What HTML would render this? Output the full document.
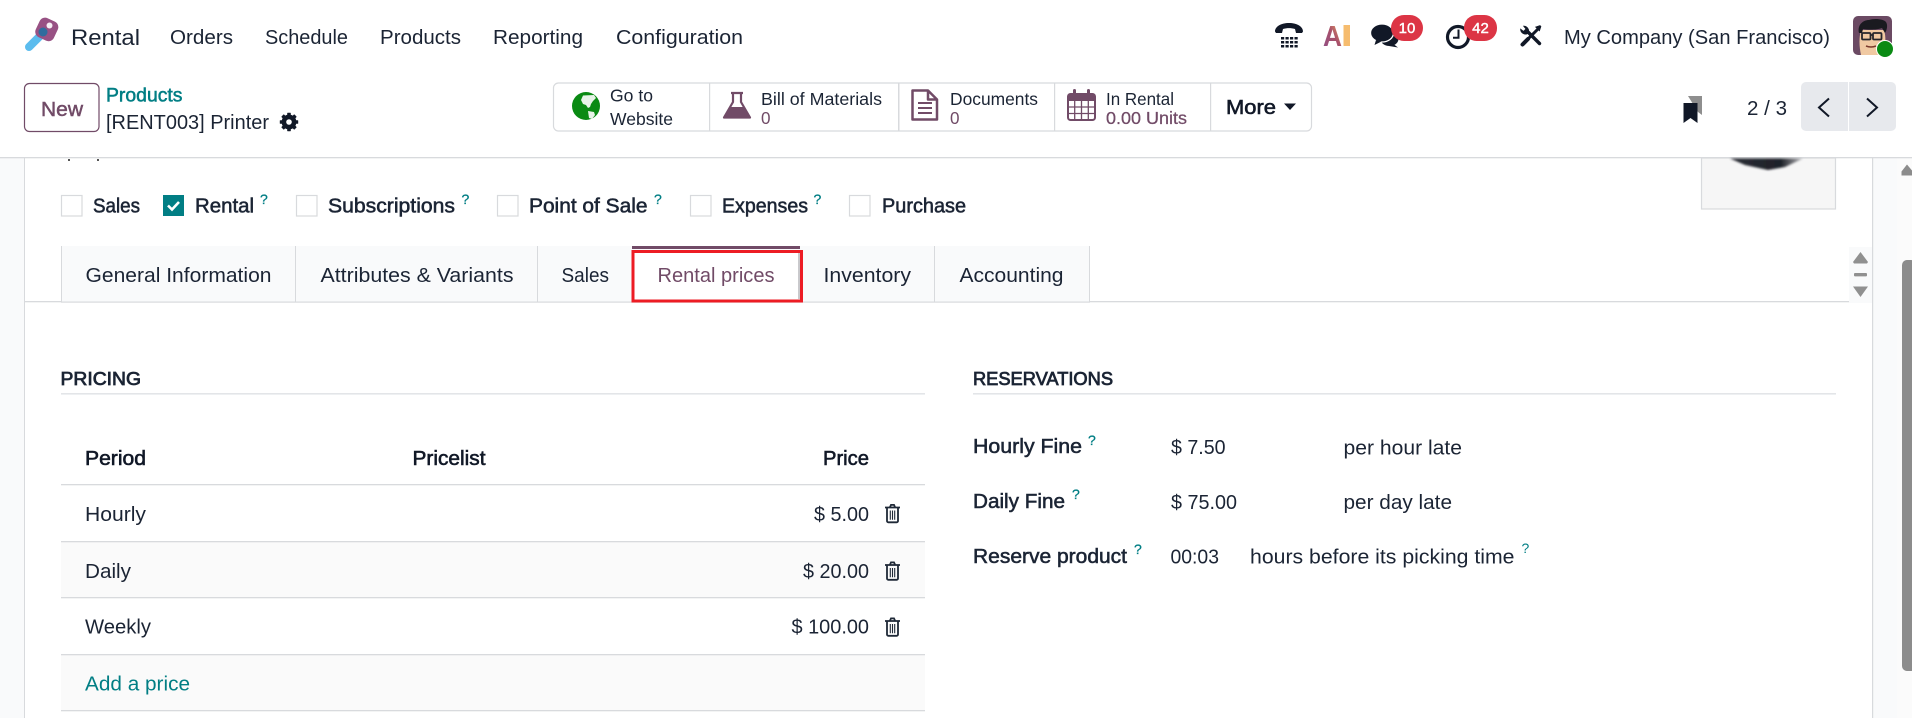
<!DOCTYPE html>
<html lang="en">
<head>
<meta charset="utf-8">
<title>Rental - Printer</title>
<style>
html,body{margin:0;padding:0;background:#fff;width:1912px;height:718px;overflow:hidden}
svg{display:block}
text{font-family:"Liberation Sans",Arial,sans-serif;font-size:20.5px;fill:#1b2434;white-space:pre}
.m{stroke:#1b2434;stroke-width:.55}
.b{fill:#111827;stroke:#111827;stroke-width:.6}
.h{fill:#1b2434;stroke:#1b2434;stroke-width:.8;font-size:18.5px}
.s{font-size:17.5px}
.p{fill:#714B67}
.t{fill:#017E84}
.q{font-size:14px;fill:#017E84;stroke:#017E84;stroke-width:.3}
.w{font-size:15px;fill:#fff;stroke:#fff;stroke-width:.4;text-anchor:middle}
.cb{fill:#fff;stroke:#d8dadd;stroke-width:1.2}
.ln{fill:#d8dadd}
</style>
</head>
<body>
<svg width="1912" height="718" viewBox="0 0 1912 718" xmlns="http://www.w3.org/2000/svg">
<defs>
<linearGradient id="aig" x1="0" y1="1" x2="1" y2="0"><stop offset="0" stop-color="#8e4f8a"/><stop offset=".55" stop-color="#a8506a"/><stop offset="1" stop-color="#f6b25c"/></linearGradient>
<linearGradient id="prn" x1="0" y1="0" x2="1" y2="0"><stop offset="0" stop-color="#2a2d35"/><stop offset=".7" stop-color="#1e2128"/><stop offset="1" stop-color="#b8b8bc"/></linearGradient>
<filter id="bl"><feGaussianBlur stdDeviation="1"/></filter>
<g id="tr" fill="none" stroke="#1f2937" stroke-width="1.8">
<path d="M0 3.5H15M4.8 3.5 6 .9H9L10.200 3.500"/>
<path d="M2 3.500V17a1.300 1.300 0 0 0 1.300 1.300H11.700A1.300 1.300 0 0 0 13 17V3.500"/>
<path stroke-width="1.100" d="M5.300 6.500V15.800M7.500 6.500V15.800M9.700 6.500V15.800"/>
</g>
</defs>

<rect width="1912" height="718" fill="#fff"/>

<!-- gutters -->
<rect x="0" y="158" width="24" height="560" fill="#f9fafb"/>
<rect x="24" y="158" width="1" height="560" class="ln"/>
<rect x="1873" y="158" width="24" height="560" fill="#f9fafb"/>
<rect x="1872" y="158" width="1.200" height="560" class="ln"/>
<rect x="1897" y="158" width="15" height="560" fill="#fbfbfb"/>
<path d="M1907 164.500l5 6v5h-10.500v-4z" fill="#8c8c8c"/>
<rect x="1902" y="260" width="14" height="411" rx="5" fill="#8c8c8c"/>

<!-- top bar -->
<g>
<line x1="29" y1="47" x2="44" y2="32" stroke="#5bbcee" stroke-width="8" stroke-linecap="round"/>
<rect x="37" y="19" width="20" height="21" rx="6" fill="#985184" transform="rotate(25 47 29)"/>
<circle cx="49.500" cy="25.500" r="3" fill="#f6eef4"/>
<circle cx="43" cy="32" r="4.500" fill="#2f6c9e"/>
</g>
<text x="71" y="45" style="font-size:22.500px" textLength="69" lengthAdjust="spacingAndGlyphs">Rental</text>
<text x="170" y="44" textLength="63" lengthAdjust="spacingAndGlyphs">Orders</text>
<text x="265" y="44" textLength="83" lengthAdjust="spacingAndGlyphs">Schedule</text>
<text x="380" y="44" textLength="81" lengthAdjust="spacingAndGlyphs">Products</text>
<text x="493" y="44" textLength="90" lengthAdjust="spacingAndGlyphs">Reporting</text>
<text x="616" y="44" textLength="127" lengthAdjust="spacingAndGlyphs">Configuration</text>

<!-- phone -->
<path d="M1275 31.500c0-5 6-8.500 14-8.500s14 3.500 14 8.500l-1 1.500h-6l-1-4c-4-1.200-8-1.200-12 0l-1 4h-6z" fill="#111827"/>
<g fill="#111827">
<rect x="1281" y="37" width="3.200" height="2.500"/><rect x="1285.500" y="37" width="3.200" height="2.500"/><rect x="1290" y="37" width="3.200" height="2.500"/><rect x="1294.500" y="37" width="3.200" height="2.500"/>
<rect x="1281" y="41" width="3.200" height="2.500"/><rect x="1285.500" y="41" width="3.200" height="2.500"/><rect x="1290" y="41" width="3.200" height="2.500"/><rect x="1294.500" y="41" width="3.200" height="2.500"/>
<rect x="1281" y="45" width="3.200" height="2.500"/><rect x="1285.500" y="45" width="3.200" height="2.500"/><rect x="1290" y="45" width="3.200" height="2.500"/><rect x="1294.500" y="45" width="3.200" height="2.500"/>
</g>
<!-- AI -->
<text x="1323" y="46" style="font-size:29px;font-weight:bold;fill:url(#aig)" textLength="19" lengthAdjust="spacingAndGlyphs">A</text>
<rect x="1343.500" y="25" width="6.500" height="21" fill="#f6bc6e"/>
<!-- chat -->
<ellipse cx="1389.500" cy="39" rx="9" ry="7" fill="#111827"/>
<path d="M1392 43l6 4.500-9-1.500z" fill="#111827"/>
<ellipse cx="1382" cy="33" rx="11.500" ry="9" fill="#111827" stroke="#fff" stroke-width="1.300"/>
<path d="M1376 40l-1.500 5 7-3.500z" fill="#111827"/>
<rect x="1391" y="15" width="32" height="26" rx="13" fill="#dc3545"/>
<text x="1407" y="33" class="w">10</text>
<!-- clock -->
<circle cx="1458" cy="37" r="10.500" fill="none" stroke="#111827" stroke-width="3.200"/>
<path d="M1458.500 29.500V37.800H1453" fill="none" stroke="#111827" stroke-width="2"/>
<rect x="1464" y="15" width="33" height="26" rx="12.500" fill="#dc3545"/>
<text x="1480.500" y="33" class="w">42</text>
<!-- tools -->
<g fill="none" stroke="#111827">
<path d="M1528 32 1539.500 43.500" stroke-width="3.400" stroke-linecap="round"/>
<path d="M1520.500 29a5 5 0 0 0 6.500 5l1.500-1.500a5 5 0 0 0-5-6.500l2.300 3-2.300 2.300z" fill="#111827" stroke-width=".6"/>
<path d="M1537.500 29.500 1524.500 42.500" stroke-width="3" stroke-linecap="round"/>
<path d="M1535.500 27l4.500-1.500 1 1-1.500 4.500z" fill="#111827" stroke-width=".6"/>
<path d="M1528 39l-5.500 5.500" stroke-width="4" stroke-linecap="round"/>
</g>
<text x="1564" y="44" textLength="266" lengthAdjust="spacingAndGlyphs">My Company (San Francisco)</text>
<!-- avatar -->
<rect x="1853" y="16" width="39" height="39" rx="5" fill="#6b4a63"/>
<path d="M1861 55c-2-9-2-18 0-25h23c2 6 2 16-1 25z" fill="#f0c9a2"/>
<path d="M1859 33c-2-8 4-13 10-13 5-2 15-1 17 2 2 3 1 8-1 11l-3-5c-5 2-14 2-19 1l-1 4z" fill="#1a1a20"/>
<g fill="none" stroke="#26262c" stroke-width="1.800">
<rect x="1862" y="33" width="8.500" height="6.500" rx="1"/><rect x="1873" y="33" width="8.500" height="6.500" rx="1"/><path d="M1870.500 35h2.500"/>
</g>
<path d="M1866 46q5 2 10 0" fill="none" stroke="#7a3a2c" stroke-width="1.500"/>
<circle cx="1885" cy="49" r="8.500" fill="#0a8a13" stroke="#fff" stroke-width="1"/>

<!-- control row -->
<rect x="24.500" y="83.500" width="74.500" height="48" rx="5" fill="#fff" stroke="#714B67" stroke-width="1.200"/>
<text x="41" y="116" class="p" stroke="#714B67" stroke-width=".5" textLength="42" lengthAdjust="spacingAndGlyphs">New</text>
<text x="106" y="101.500" class="t" stroke="#017E84" stroke-width=".5" style="font-size:19px" textLength="76.500" lengthAdjust="spacingAndGlyphs">Products</text>
<text x="106" y="129" textLength="163" lengthAdjust="spacingAndGlyphs">[RENT003] Printer</text>
<g fill="#111827" transform="translate(289 122)">
<circle r="5.800" fill="none" stroke="#111827" stroke-width="3.200"/>
<rect x="-1.800" y="-9.200" width="3.600" height="18.400" rx=".6"/>
<rect x="-1.800" y="-9.200" width="3.600" height="18.400" rx=".6" transform="rotate(45)"/>
<rect x="-1.800" y="-9.200" width="3.600" height="18.400" rx=".6" transform="rotate(90)"/>
<rect x="-1.800" y="-9.200" width="3.600" height="18.400" rx=".6" transform="rotate(135)"/>
<circle r="2.800" fill="#fff"/>
</g>

<!-- stat buttons -->
<rect x="553.500" y="83" width="758" height="48" rx="5" fill="#fff" stroke="#d8dadd" stroke-width="1.200"/>
<rect x="709" y="83" width="1.200" height="48" class="ln"/>
<rect x="898" y="83" width="1.500" height="48" class="ln"/>
<rect x="1054" y="83" width="1.200" height="48" class="ln"/>
<rect x="1210" y="83" width="1.200" height="48" class="ln"/>

<circle cx="586" cy="106" r="14" fill="#0a8a13"/>
<path d="M583 95.500l11-.5 2 3-3 3-2 3-1 3-2 1-2-3-3-1-2-4z M588 111l6 1 1 3-3 4-3-1z" fill="#e8f3e8"/>
<text x="610" y="101.500" class="s" textLength="43" lengthAdjust="spacingAndGlyphs">Go to</text>
<text x="610" y="125" class="s" textLength="63" lengthAdjust="spacingAndGlyphs">Website</text>

<path d="M731 93h12M733 93v9l-9 15.500h26l-9-15.500v-9" fill="none" stroke="#714B67" stroke-width="2.200" stroke-linejoin="round"/>
<path d="M729.500 107h15l6 11.500H723.500z" fill="#714B67"/>
<text x="761" y="105" class="s" textLength="121" lengthAdjust="spacingAndGlyphs">Bill of Materials</text>
<text x="761" y="124" class="s p" textLength="9.500" lengthAdjust="spacingAndGlyphs">0</text>

<path d="M912.500 90.500H928l9 9v20h-24.500zM928 90.500v9h9" fill="none" stroke="#714B67" stroke-width="2.500" stroke-linejoin="round"/>
<path d="M918 103h14M918 108h14M918 113h14" stroke="#714B67" stroke-width="2"/>
<text x="950" y="105" class="s" textLength="88" lengthAdjust="spacingAndGlyphs">Documents</text>
<text x="950" y="124" class="s p" textLength="9.500" lengthAdjust="spacingAndGlyphs">0</text>

<rect x="1068" y="94" width="27" height="26" rx="2.500" fill="none" stroke="#714B67" stroke-width="2"/>
<rect x="1068" y="94" width="27" height="7" fill="#714B67"/>
<path d="M1074.500 90.500v6.500M1088.500 90.500v6.500" stroke="#714B67" stroke-width="3" stroke-linecap="round"/>
<path d="M1068 107h27M1068 113.500h27M1074.700 101v19M1081.500 101v19M1088.300 101v19" stroke="#714B67" stroke-width="1.300"/>
<text x="1106" y="105" class="s" textLength="68" lengthAdjust="spacingAndGlyphs">In Rental</text>
<text x="1106" y="124" class="s p" stroke="#714B67" stroke-width=".25" textLength="81" lengthAdjust="spacingAndGlyphs">0.00 Units</text>

<text x="1226" y="114" class="b" textLength="50" lengthAdjust="spacingAndGlyphs">More</text>
<path d="M1284 103.500h12l-6 6.500z" fill="#111827"/>

<!-- right control -->
<path d="M1688 96h14v19l-4-3z" fill="#8e8e8e"/>
<path d="M1683.500 103h14v20l-7-5-7 5z" fill="#111827"/>
<text x="1747" y="115" textLength="40" lengthAdjust="spacingAndGlyphs">2 / 3</text>
<rect x="1801" y="82" width="95" height="49" rx="5" fill="#e7e9ed"/>
<rect x="1848" y="82" width="1" height="49" fill="#fff"/>
<path d="M1829 98.500l-10 9 10 9" fill="none" stroke="#111827" stroke-width="2"/>
<path d="M1867 98.500l10 9-10 9" fill="none" stroke="#111827" stroke-width="2"/>

<rect x="0" y="157" width="1912" height="1.300" class="ln"/>

<!-- leftover title marks -->
<path d="M69 159v2M98 159v2" stroke="#555" stroke-width="2"/>

<!-- product image -->
<rect x="1701.500" y="158" width="134" height="51" fill="#f6f6f6" stroke="#d8dadd" stroke-width="1.200"/>
<path d="M1730 158.500 1745 165 1768 170 1785 167 1803 158.500Z" fill="url(#prn)" filter="url(#bl)"/>

<!-- checkboxes -->
<rect x="61.500" y="195.500" width="20.500" height="20.500" class="cb"/>
<text x="93" y="212.700" class="m" textLength="47" lengthAdjust="spacingAndGlyphs">Sales</text>
<rect x="163" y="195" width="21" height="21" fill="#017E84"/>
<path d="M168 205.500l4 4 7-7.500" fill="none" stroke="#fff" stroke-width="2.600"/>
<text x="195" y="212.700" class="m" textLength="59" lengthAdjust="spacingAndGlyphs">Rental</text>
<text x="260" y="204" class="q">?</text>
<rect x="296.500" y="195.500" width="20.500" height="20.500" class="cb"/>
<text x="328" y="212.700" class="m" textLength="127" lengthAdjust="spacingAndGlyphs">Subscriptions</text>
<text x="461.500" y="204" class="q">?</text>
<rect x="497.500" y="195.500" width="20.500" height="20.500" class="cb"/>
<text x="529" y="212.700" class="m" textLength="118.500" lengthAdjust="spacingAndGlyphs">Point of Sale</text>
<text x="654" y="204" class="q">?</text>
<rect x="690.500" y="195.500" width="20.500" height="20.500" class="cb"/>
<text x="722" y="212.700" class="m" textLength="86" lengthAdjust="spacingAndGlyphs">Expenses</text>
<text x="813.500" y="204" class="q">?</text>
<rect x="849.500" y="195.500" width="20.500" height="20.500" class="cb"/>
<text x="882" y="212.700" class="m" textLength="84" lengthAdjust="spacingAndGlyphs">Purchase</text>

<!-- tabs -->
<rect x="25" y="301" width="1824" height="1.300" class="ln"/>
<rect x="61" y="246" width="1028" height="56" fill="#f9fafb"/>
<rect x="61" y="246" width="1" height="56" class="ln"/>
<rect x="295" y="246" width="1" height="56" class="ln"/>
<rect x="537" y="246" width="1" height="56" class="ln"/>
<rect x="934" y="246" width="1" height="56" class="ln"/>
<rect x="1089" y="246" width="1" height="56" class="ln"/>
<rect x="61" y="301.500" width="1029" height="1.200" class="ln"/>
<text x="85.500" y="282" textLength="186" lengthAdjust="spacingAndGlyphs">General Information</text>
<text x="320.500" y="282" textLength="193" lengthAdjust="spacingAndGlyphs">Attributes &amp; Variants</text>
<text x="561.500" y="282" textLength="47.500" lengthAdjust="spacingAndGlyphs">Sales</text>
<rect x="632" y="246" width="168" height="3" fill="#714B67"/>
<rect x="633" y="251.500" width="168.500" height="49.500" fill="#fff" stroke="#ed1c24" stroke-width="3"/>
<rect x="798" y="253" width="2" height="46" fill="#c9c9cc"/>
<text x="657.500" y="282" class="p" textLength="117" lengthAdjust="spacingAndGlyphs">Rental prices</text>
<text x="823.500" y="282" textLength="87.500" lengthAdjust="spacingAndGlyphs">Inventory</text>
<text x="959.500" y="282" textLength="104" lengthAdjust="spacingAndGlyphs">Accounting</text>

<!-- scroll-tabs widget -->
<rect x="1849" y="247" width="23" height="56" fill="#f9fafb"/>
<path d="M1860.500 252l7.500 10 -1 1.500h-13l-1-1.500z" fill="#909090"/>
<rect x="1854" y="273" width="13" height="3.400" rx="1" fill="#909090"/>
<path d="M1853 286.500h15l-7.500 10.500z" fill="#909090"/>

<!-- PRICING -->
<text x="60.500" y="385" class="h" textLength="80.500" lengthAdjust="spacingAndGlyphs">PRICING</text>
<rect x="61" y="393" width="864" height="1.600" fill="#e3e5e8"/>

<rect x="61" y="541" width="864" height="56" fill="#fafafa"/>
<rect x="61" y="654" width="864" height="56" fill="#fafafa"/>
<rect x="61" y="484" width="864" height="1.300" class="ln"/>
<rect x="61" y="541" width="864" height="1.300" class="ln"/>
<rect x="61" y="597" width="864" height="1.300" class="ln"/>
<rect x="61" y="654" width="864" height="1.300" class="ln"/>
<rect x="61" y="710" width="864" height="1.300" class="ln"/>

<text x="85" y="465" class="b" textLength="61" lengthAdjust="spacingAndGlyphs">Period</text>
<text x="412.500" y="465" class="b" textLength="73" lengthAdjust="spacingAndGlyphs">Pricelist</text>
<text x="823" y="465" class="b" textLength="46" lengthAdjust="spacingAndGlyphs">Price</text>

<text x="85" y="521" textLength="61" lengthAdjust="spacingAndGlyphs">Hourly</text>
<text x="814" y="521" textLength="55" lengthAdjust="spacingAndGlyphs">$ 5.00</text>
<use href="#tr" x="885" y="504"/>
<text x="85" y="578" textLength="46" lengthAdjust="spacingAndGlyphs">Daily</text>
<text x="803" y="578" textLength="66" lengthAdjust="spacingAndGlyphs">$ 20.00</text>
<use href="#tr" x="885" y="561.500"/>
<text x="85" y="633.700" textLength="66" lengthAdjust="spacingAndGlyphs">Weekly</text>
<text x="791.500" y="633.700" textLength="77.500" lengthAdjust="spacingAndGlyphs">$ 100.00</text>
<use href="#tr" x="885" y="617.500"/>
<text x="85" y="690.700" class="t" textLength="105" lengthAdjust="spacingAndGlyphs">Add a price</text>

<!-- RESERVATIONS -->
<text x="973" y="385" class="h" textLength="140" lengthAdjust="spacingAndGlyphs">RESERVATIONS</text>
<rect x="973" y="393" width="863" height="1.600" fill="#e3e5e8"/>

<text x="973" y="453" class="m" textLength="109" lengthAdjust="spacingAndGlyphs">Hourly Fine</text>
<text x="1088" y="445" class="q">?</text>
<text x="1171" y="454" textLength="54.600" lengthAdjust="spacingAndGlyphs">$ 7.50</text>
<text x="1343.500" y="454.700" textLength="118.500" lengthAdjust="spacingAndGlyphs">per hour late</text>

<text x="973" y="508" class="m" textLength="92" lengthAdjust="spacingAndGlyphs">Daily Fine</text>
<text x="1072" y="499" class="q">?</text>
<text x="1171" y="509" textLength="66" lengthAdjust="spacingAndGlyphs">$ 75.00</text>
<text x="1343.500" y="509" textLength="108.500" lengthAdjust="spacingAndGlyphs">per day late</text>

<text x="973" y="563" class="m" textLength="154" lengthAdjust="spacingAndGlyphs">Reserve product</text>
<text x="1134" y="554" class="q">?</text>
<text x="1170.500" y="563.700" textLength="48.500" lengthAdjust="spacingAndGlyphs">00:03</text>
<text x="1250" y="563.700" textLength="264.500" lengthAdjust="spacingAndGlyphs">hours before its picking time</text>
<text x="1521.500" y="553" class="q" style="stroke-width:0">?</text>
</svg>
</body>
</html>
